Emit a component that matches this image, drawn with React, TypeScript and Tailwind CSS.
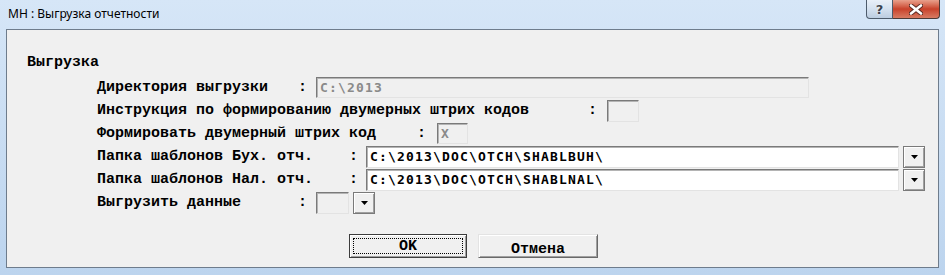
import type { ReactNode } from 'react';

const lbl = "font-['Liberation_Mono',monospace] font-bold text-[15px] leading-none text-black whitespace-pre";
const val = "font-['DejaVu_Sans_Mono',monospace] font-bold text-[13px] tracking-[1.17px] leading-none whitespace-pre";
const sunken =
  'border border-t-[#7a7a7a] border-l-[#7a7a7a] border-r-[#e3e3e3] border-b-[#e3e3e3] shadow-[inset_1px_1px_0_#b4b4b4]';

const DropButton = () => (
  <div className="ml-[4px] flex h-[22px] w-[22px] items-center justify-center border border-[#7a7a7a] bg-[#f0f0f0] shadow-[inset_1px_1px_0_#ffffff,inset_-1px_-1px_0_#a0a0a0]">
    <svg width="7" height="4" viewBox="0 0 7 4">
      <path d="M0 0h7L3.5 4z" fill="#000" />
    </svg>
  </div>
);

interface RowProps {
  label: string;
  labelW: string;
  gap: string;
  children: ReactNode;
}

const Row = ({ label, labelW, gap, children }: RowProps) => (
  <div className="flex h-[23px] items-center">
    <span className={`${lbl} ${labelW}`}>{label}</span>
    <span className={`${lbl} w-[9px] text-center`}>:</span>
    <div className={`flex items-center ${gap}`}>{children}</div>
  </div>
);

export default function App() {
  return (
    <div className="flex h-[275px] w-[945px] flex-col overflow-hidden bg-[#c2d8ef] bg-gradient-to-b from-[#d6e6f7] to-[#bcd4ee]">
      {/* Title bar */}
      <div className="flex h-[29px] shrink-0 items-start">
        <span className="pl-[8px] pt-[6px] font-['Noto_Sans',sans-serif] text-[12px] leading-[16px] text-black">
          МН : Выгрузка отчетности
        </span>
        <div className="ml-auto mr-[5px] flex h-[19px]">
          <div className="flex w-[27px] items-center justify-center rounded-bl-[4px] border border-t-0 border-[#4d5b6b] bg-gradient-to-b from-[#e9f0f8] via-[#d4e1ef] to-[#bccde0]">
            <span className="font-['DejaVu_Sans',sans-serif] text-[13px] font-bold leading-none text-[#3b4450] [text-shadow:0_0_2px_#fff]">
              ?
            </span>
          </div>
          <div className="flex w-[47px] items-center justify-center rounded-br-[4px] border border-l-0 border-t-0 border-[#4d3a36] bg-gradient-to-b from-[#e8a08c] via-[#c8412a] to-[#d77a62]">
            <svg width="14" height="11" viewBox="0 0 14 11">
              <path d="M2 1.5l10 8M12 1.5l-10 8" stroke="#5a2a22" strokeWidth="4.5" strokeLinecap="round" />
              <path d="M2 1.5l10 8M12 1.5l-10 8" stroke="#fff" strokeWidth="2.6" strokeLinecap="round" />
            </svg>
          </div>
        </div>
      </div>

      {/* Client area */}
      <div className="mx-[6px] h-[239px] shrink-0 border border-[#6e7c8c] bg-[#f0f0f0] pl-[20px] pt-[22px]">
        <div className={`${lbl} flex h-[20px] items-center`}>Выгрузка</div>

        <div className="mt-[4px] flex flex-col pl-[70px]">
          <Row label="Директория выгрузки" labelW="w-[201px]" gap="ml-[9px]">
            <div className={`${sunken} flex h-[21px] w-[493px] items-center bg-[#f0f0f0] pl-[3px]`}>
              <span className={`${val} text-[#8a8a8a]`}>{'C:\\2013'}</span>
            </div>
          </Row>
          <Row label="Инструкция по формированию двумерных штрих кодов" labelW="w-[491px]" gap="ml-[10px]">
            <div className={`${sunken} h-[22px] w-[32px] bg-[#f0f0f0]`} />
          </Row>
          <Row label="Формировать двумерный штрих код" labelW="w-[320px]" gap="ml-[11px]">
            <div className={`${sunken} flex h-[21px] w-[31px] items-center bg-[#f0f0f0] pl-[3px]`}>
              <span className={`${val} text-[#8a8a8a]`}>X</span>
            </div>
          </Row>
          <Row label="Папка шаблонов Бух. отч." labelW="w-[252px]" gap="ml-[8px]">
            <div className={`${sunken} flex h-[22px] w-[533px] items-center bg-white pl-[3px]`}>
              <span className={`${val} text-black`}>{'C:\\2013\\DOC\\OTCH\\SHABLBUH\\'}</span>
            </div>
            <DropButton />
          </Row>
          <Row label="Папка шаблонов Нал. отч." labelW="w-[252px]" gap="ml-[8px]">
            <div className={`${sunken} flex h-[22px] w-[533px] items-center bg-white pl-[3px]`}>
              <span className={`${val} text-black`}>{'C:\\2013\\DOC\\OTCH\\SHABLNAL\\'}</span>
            </div>
            <DropButton />
          </Row>
          <Row label="Выгрузить данные" labelW="w-[201px]" gap="ml-[9px]">
            <div className={`${sunken} h-[22px] w-[33px] bg-[#f0f0f0]`} />
            <DropButton />
          </Row>
        </div>

        {/* Buttons */}
        <div className="ml-[322px] mt-[20px] flex gap-[11px]">
          <button className="h-[24px] w-[118px] border border-[#3c3c3c] bg-[#f0f0f0] p-[3px] shadow-[inset_1px_1px_0_#ffffff,inset_-1px_-1px_0_#a0a0a0]">
            <div className={`${lbl} flex h-full w-full items-center justify-center border border-dotted border-black`}>OK</div>
          </button>
          <button className="h-[24px] w-[120px] border border-t-[#e3e3e3] border-l-[#e3e3e3] border-r-[#696969] border-b-[#696969] bg-[#f0f0f0] shadow-[inset_1px_1px_0_#ffffff,inset_-1px_-1px_0_#a0a0a0]">
            <span className={lbl}>Отмена</span>
          </button>
        </div>
      </div>
    </div>
  );
}
